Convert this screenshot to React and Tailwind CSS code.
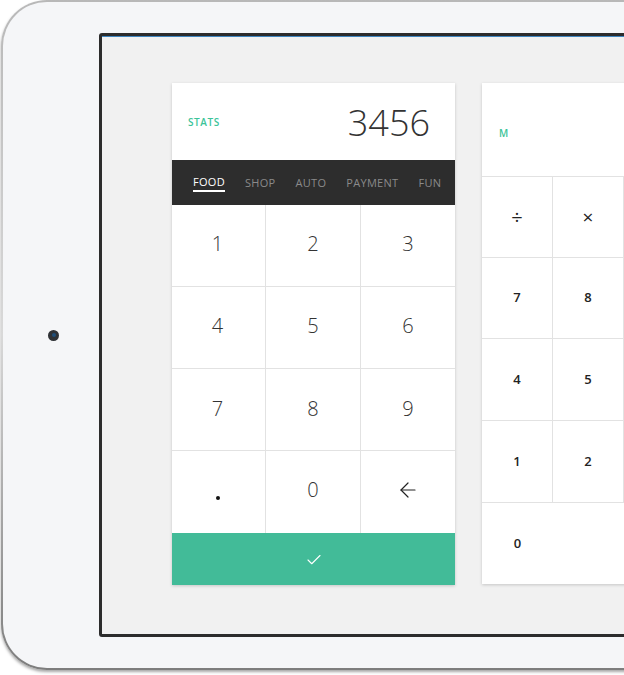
import React from "react";
import { Check, ArrowLeft } from "lucide-react";

const font = { fontFamily: '"Open Sans", "Liberation Sans", sans-serif' };

function Key({ children, className = "" }) {
  return (
    <div className={"flex items-center justify-center h-[82px] border-[#e2e2e2] " + className}>
      {children}
    </div>
  );
}

export default function App() {
  const tabs = ["FOOD", "SHOP", "AUTO", "PAYMENT", "FUN"];
  return (
    <div className="w-[624px] h-[675px] overflow-hidden bg-white" style={font}>
      <div className="ml-[1px] w-[800px] h-[670px] rounded-[46px] bg-gradient-to-b from-[#b8b8b8] via-[#d9d9d9] to-[#7d7d7d] p-[2px] shadow-[0_2px_3px_rgba(0,0,0,0.35)]">
        <div className="h-full rounded-[44px] bg-[#f5f6f8] flex items-center">
          <div className="ml-[45px] w-[11px] h-[11px] rounded-full bg-[#2f3236] flex items-center justify-center shrink-0">
            <div className="w-[4px] h-[4px] rounded-full bg-[#1f4f7a]" />
          </div>
          <div className="ml-[40px] w-[600px] h-[604px] shrink-0 border-[3px] border-[#2c2c2c] rounded-[3px] bg-[#f1f1f1] flex flex-col">
            <div className="h-[1px] bg-[#3f86c0]" />
            <div className="flex items-start pt-[46px] pl-[70px] gap-[27px]">
              {/* Card 1 */}
              <div className="w-[283px] shrink-0 bg-white shadow-[0_1px_3px_rgba(0,0,0,0.18)]">
                <div className="h-[77px] flex items-center justify-between pl-[16px] pr-[25px]">
                  <span className="text-[10px] font-semibold tracking-[0.6px] text-[#3cc499] mt-[1px]">STATS</span>
                  <span className="text-[36px] font-light leading-none text-[#333] mt-[3px]">3456</span>
                </div>
                <div className="h-[45px] bg-[#2d2d2d] flex items-center pl-[21px] gap-[20px] text-[11px] tracking-[0.3px]">
                  {tabs.map((t, i) =>
                    i === 0 ? (
                      <span key={t} className="text-white border-b-2 border-white leading-[14px] pt-[2px] pb-[1px]">{t}</span>
                    ) : (
                      <span key={t} className="text-[#8a8a8a] leading-[14px]">{t}</span>
                    )
                  )}
                </div>
                <div className="grid grid-cols-[94px_95px_94px] text-[20px] font-light text-[#333]">
                  <Key className="border-r border-b"><span className="-mt-[4px] -ml-[2px]">1</span></Key>
                  <Key className="border-r border-b"><span className="-mt-[4px]">2</span></Key>
                  <Key className="border-b"><span className="-mt-[4px]">3</span></Key>
                  <Key className="border-r border-b"><span className="-mt-[4px] -ml-[2px]">4</span></Key>
                  <Key className="border-r border-b"><span className="-mt-[4px]">5</span></Key>
                  <Key className="border-b"><span className="-mt-[4px]">6</span></Key>
                  <Key className="border-r border-b"><span className="-mt-[2px] -ml-[2px]">7</span></Key>
                  <Key className="border-r border-b"><span className="-mt-[2px]">8</span></Key>
                  <Key className="border-b"><span className="-mt-[2px]">9</span></Key>
                  <Key className="border-r">
                    <span className="w-[4px] h-[4px] rounded-full bg-[#111] mt-[12px] -ml-[2px]" />
                  </Key>
                  <Key className="border-r"><span className="-mt-[4px]">0</span></Key>
                  <Key>
                    <ArrowLeft size={24} strokeWidth={1.2} color="#222" className="-mt-[4px]" />
                  </Key>
                </div>
                <div className="h-[52px] bg-[#42bb98] flex items-center justify-center">
                  <Check size={18} strokeWidth={1.5} color="white" className="mt-[1px]" />
                </div>
              </div>
              {/* Card 2 */}
              <div className="w-[200px] shrink-0 bg-white shadow-[0_1px_3px_rgba(0,0,0,0.18)]">
                <div className="h-[94px] flex items-center pl-[17px] border-b border-[#e2e2e2]">
                  <span className="text-[10px] font-semibold text-[#3cc499] mt-[7px]">M</span>
                </div>
                <div className="grid grid-cols-[71px_71px_58px] text-[13px] font-semibold text-[#222]">
                  <Key className="border-r border-b !h-[81px] text-[20px] font-normal">÷</Key>
                  <Key className="border-r border-b !h-[81px] text-[19px] font-normal">×</Key>
                  <Key className="border-b !h-[81px]"></Key>
                  <Key className="border-r border-b !h-[81px]">7</Key>
                  <Key className="border-r border-b !h-[81px]">8</Key>
                  <Key className="border-b !h-[81px]"></Key>
                  <Key className="border-r border-b !h-[82px]">4</Key>
                  <Key className="border-r border-b !h-[82px]">5</Key>
                  <Key className="border-b !h-[82px]"></Key>
                  <Key className="border-r border-b !h-[82px]">1</Key>
                  <Key className="border-r border-b !h-[82px]">2</Key>
                  <Key className="border-b !h-[82px]"></Key>
                  <Key className="!h-[81px]">0</Key>
                  <Key className="!h-[81px]"></Key>
                  <Key className="!h-[81px]"></Key>
                </div>
              </div>
            </div>
          </div>
        </div>
      </div>
    </div>
  );
}
